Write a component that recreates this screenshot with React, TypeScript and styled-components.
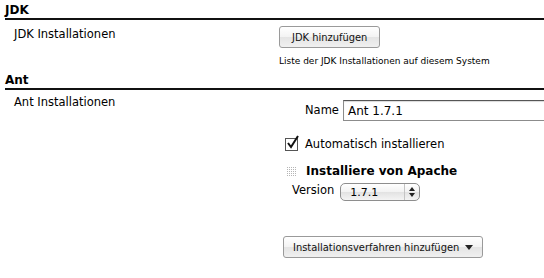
import React from "react";
import styled, { createGlobalStyle } from "styled-components";

const GlobalStyle = createGlobalStyle`
  body {
    margin: 0;
    background: #ffffff;
    font-family: "DejaVu Sans", Verdana, sans-serif;
    font-size: 11px;
    color: #000000;
  }
`;

const StPage = styled.div`
  width: 544px;
  height: 278px;
  overflow: hidden;
  padding: 3px 0 0 5px;
  box-sizing: border-box;
`;

const StSectionHeader = styled.div`
  font-weight: bold;
  font-size: 12px;
  line-height: 14px;
  padding-bottom: 1px;
  border-bottom: 2px solid #111111;
`;

const StRow = styled.div`
  display: grid;
  grid-template-columns: 274px 1fr;
`;

const StLabel = styled.div<{ top: number }>`
  padding-left: 9px;
  padding-top: ${({ top }) => top}px;
  font-size: 11.5px;
`;

const StField = styled.div<{ bottom: number }>`
  display: flex;
  flex-direction: column;
  align-items: flex-start;
  padding-bottom: ${({ bottom }) => bottom}px;
`;

const StAquaButton = styled.button<{ top: number; left: number; pad: number }>`
  margin-top: ${({ top }) => top}px;
  margin-left: ${({ left }) => left}px;
  height: 22px;
  padding: 0 ${({ pad }) => pad}px;
  border: 1px solid #9a9a9a;
  border-radius: 3px;
  background: linear-gradient(#ffffff 0%, #f3f3f3 50%, #e4e4e4 51%, #f0f0f0 100%);
  font-family: "DejaVu Sans Condensed", "DejaVu Sans", sans-serif;
  font-size: 11px;
  color: #111111;
  display: flex;
  align-items: center;
  gap: 6px;
`;

const StHint = styled.div`
  margin-top: 8px;
  font-size: 9px;
`;

const StNameRow = styled.div`
  display: flex;
  align-items: center;
  margin-top: 8px;
  margin-left: 26px;
  gap: 4px;
  font-size: 11.5px;
`;

const StTextInput = styled.div`
  width: 230px;
  height: 19px;
  border: 1px solid #8c8c8c;
  border-top-color: #555555;
  box-shadow: inset 0 1px 1px rgba(0, 0, 0, 0.15);
  padding-left: 4px;
  display: flex;
  align-items: center;
  font-size: 12px;
  margin-top: 2px;
`;

const StCheckRow = styled.div`
  display: flex;
  align-items: center;
  gap: 7px;
  margin-top: 16px;
  margin-left: 6px;
  font-size: 11.5px;
`;

const StCheckbox = styled.span`
  width: 11px;
  height: 11px;
  border: 1px solid #555555;
  position: relative;
  background: #ffffff;
`;

const StBlockHeader = styled.div`
  display: flex;
  align-items: center;
  gap: 9px;
  margin-top: 13px;
  margin-left: 7px;
  font-weight: bold;
  font-size: 12px;
`;

const StVersionRow = styled.div`
  display: flex;
  align-items: center;
  gap: 6px;
  margin-top: 1px;
  margin-left: 13px;
  font-size: 11.5px;
`;

const StSelect = styled.div`
  width: 80px;
  height: 18px;
  box-sizing: border-box;
  border: 1px solid #8e8e8e;
  border-radius: 5px;
  background: linear-gradient(#ffffff 0%, #f2f2f2 50%, #e2e2e2 51%, #f4f4f4 100%);
  display: flex;
  align-items: center;
  justify-content: space-between;
  padding: 0 4px 0 9px;
  font-size: 11px;
  margin-top: 4px;
`;

const StArrows = styled.div`
  border-left: 1px solid #c4c4c4;
  height: 100%;
  padding-left: 4px;
  display: flex;
  align-items: center;
`;

const Grip = () => (
  <svg width="11" height="11" viewBox="0 0 11 11">
    {[0, 1, 2, 3, 4].map((r) =>
      [0, 1, 2, 3, 4].map((c) => (
        <rect key={`${r}-${c}`} x={c * 2 + 1} y={r * 2 + 1} width="1" height="1" fill="#b5b5b5" />
      ))
    )}
  </svg>
);

const App = () => {
  return (
    <>
      <GlobalStyle />
      <StPage>
        <StSectionHeader>JDK</StSectionHeader>
        <StRow>
          <StLabel top={7}>JDK Installationen</StLabel>
          <StField bottom={7}>
            <StAquaButton top={6} left={0} pad={12}>JDK hinzufügen</StAquaButton>
            <StHint>Liste der JDK Installationen auf diesem System</StHint>
          </StField>
        </StRow>
        <StSectionHeader>Ant</StSectionHeader>
        <StRow>
          <StLabel top={5}>Ant Installationen</StLabel>
          <StField bottom={0}>
            <StNameRow>
              Name
              <StTextInput>Ant 1.7.1</StTextInput>
            </StNameRow>
            <StCheckRow>
              <StCheckbox>
                <svg width="14" height="14" viewBox="0 0 14 14" style={{ position: "absolute", left: 0, top: -4 }}>
                  <path d="M2 8 L5 12 L12 1" fill="none" stroke="#111" strokeWidth="2" />
                </svg>
              </StCheckbox>
              Automatisch installieren
            </StCheckRow>
            <StBlockHeader>
              <Grip />
              Installiere von Apache
            </StBlockHeader>
            <StVersionRow>
              Version
              <StSelect>
                1.7.1
                <StArrows>
                  <svg width="6" height="10" viewBox="0 0 6 10">
                    <path d="M0 4 L3 0 L6 4 Z M0 6 L3 10 L6 6 Z" fill="#222" />
                  </svg>
                </StArrows>
              </StSelect>
            </StVersionRow>
            <StAquaButton top={35} left={4} pad={9}>
              Installationsverfahren hinzufügen
              <svg width="8" height="5" viewBox="0 0 8 5">
                <path d="M0 0 L8 0 L4 5 Z" fill="#222" />
              </svg>
            </StAquaButton>
          </StField>
        </StRow>
      </StPage>
    </>
  );
};

export default App;
